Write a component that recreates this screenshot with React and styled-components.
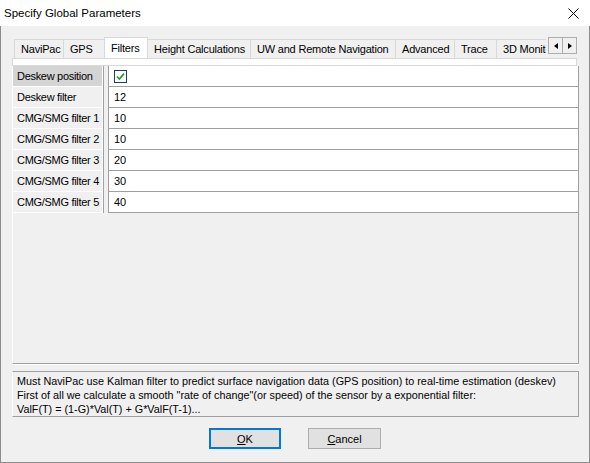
import React from 'react'
import styled, { createGlobalStyle } from 'styled-components'

const Global = createGlobalStyle`
html, body {
  margin: 0;
  padding: 0;
  background: #f0f0f0;
}
* { box-sizing: border-box; }
`

const Window = styled.div`
width: 590px;
height: 463px;
display: flex;
flex-direction: column;
font-family: "Liberation Sans", Arial, sans-serif;
font-size: 11px;
color: #000;
background: #f0f0f0;
`

const TitleBar = styled.div`
height: 26px;
flex: none;
display: flex;
align-items: center;
justify-content: space-between;
background: #fff;
padding-left: 4px;
padding-right: 11px;
font-size: 11.5px;
`

const Close = styled.svg`
width: 11px;
height: 11px;
display: block;
`

const Body = styled.div`
flex: 1;
display: flex;
flex-direction: column;
border: 1px solid #8c8c8c;
border-top: none;
padding: 11px 10px 0 11px;
`

const TabsRow = styled.div`
display: flex;
height: 21px;
margin: 0 2px 0 2px;
`

const TabList = styled.div`
flex: 1;
display: flex;
align-items: flex-end;
overflow: hidden;
padding-left: 1px;
`

const Tab = styled.div`
flex: none;
width: ${p => p.$w}px;
height: ${p => (p.$active ? 22 : 19)}px;
margin-left: -1px;
margin-bottom: ${p => (p.$active ? -1 : 0)}px;
display: flex;
align-items: center;
padding-left: 6px;
padding-bottom: ${p => (p.$active ? 2 : 0)}px;
letter-spacing: -0.2px;
white-space: nowrap;
overflow: hidden;
background: ${p => (p.$active ? '#fff' : '#f0f0f0')};
border: 1px solid #d9d9d9;
border-bottom: none;
position: relative;
z-index: ${p => (p.$active ? 2 : 1)};
`

const Arrows = styled.div`
display: flex;
margin-left: 2px;
`

const ArrowBtn = styled.div`
width: 15px;
height: 17px;
display: flex;
align-items: center;
justify-content: center;
background: #f0f0f0;
border: 1px solid #adadad;
& + & { margin-left: -1px; }
`

const Tri = styled.span`
width: 0;
height: 0;
border-top: 3.5px solid transparent;
border-bottom: 3.5px solid transparent;
${p => (p.$dir === 'left' ? 'border-right: 4px solid #000;' : 'border-left: 4px solid #000;')}
`

const PageStrip = styled.div`
height: 8px;
margin-right: 2px;
background: #fff;
border: 1px solid #d9d9d9;
`

const Grid = styled.div`
height: 298px;
display: flex;
flex-direction: column;
background: #f0f0f0;
border-left: 1px solid #fff;
border-right: 1px solid #a0a0a0;
border-bottom: 1px solid #a0a0a0;
box-shadow: 0 1px 0 #fff;
`

const Row = styled.div`
display: flex;
height: 21px;
`

const Label = styled.div`
width: 89px;
display: flex;
align-items: center;
padding-left: 4px;
letter-spacing: -0.3px;
background: ${p => (p.$selected ? '#d4d4d4' : '#f0f0f0')};
border-bottom: 1px solid #fff;
white-space: nowrap;
overflow: hidden;
`

const Divider = styled.div`
width: 7px;
border-left: 1px solid #fff;
border-right: 1px solid #a0a0a0;
background: linear-gradient(to right, #a0a0a0 0 1px, #f0f0f0 1px);
`

const Value = styled.div`
flex: 1;
display: flex;
align-items: center;
padding-left: 5px;
background: #fff;
border-bottom: 1px solid #a0a0a0;
`

const Check = styled.svg`
width: 13px;
height: 13px;
display: block;
`

const Description = styled.div`
margin-top: 7px;
height: 46px;
padding: 2px 4px 0 4px;
line-height: 14px;
font-size: 10.8px;
border: 1px solid #a0a0a0;
border-left-color: #fff;
white-space: nowrap;
`

const Buttons = styled.div`
display: flex;
justify-content: center;
gap: 27px;
margin-top: 11px;
padding-right: 1px;
`

const Button = styled.div`
width: ${p => p.$w}px;
height: 21px;
display: flex;
align-items: center;
justify-content: center;
background: #e1e1e1;
border: ${p => (p.$focus ? '2px solid #0078d7' : '1px solid #adadad')};
`

const tabs = [
  ['NaviPac', 50],
  ['GPS', 42],
  ['Filters', 44, true],
  ['Height Calculations', 104],
  ['UW and Remote Navigation', 146],
  ['Advanced', 60],
  ['Trace', 43],
  ['3D Monitor', 70],
]

const rows = [
  ['Deskew position', null],
  ['Deskew filter', '12'],
  ['CMG/SMG filter 1', '10'],
  ['CMG/SMG filter 2', '10'],
  ['CMG/SMG filter 3', '20'],
  ['CMG/SMG filter 4', '30'],
  ['CMG/SMG filter 5', '40'],
]

export default function App() {
  return (
    <Window>
      <Global />
      <TitleBar>
        <span>Specify Global Parameters</span>
        <Close viewBox="0 0 11 11">
          <path d="M0.5 0.5 L10.5 10.5 M10.5 0.5 L0.5 10.5" stroke="#000" strokeWidth="1" fill="none" />
        </Close>
      </TitleBar>
      <Body>
        <TabsRow>
          <TabList>
            {tabs.map(([name, w, active]) => (
              <Tab key={name} $w={w} $active={active}>{name}</Tab>
            ))}
          </TabList>
          <Arrows>
            <ArrowBtn><Tri $dir="left" /></ArrowBtn>
            <ArrowBtn><Tri $dir="right" /></ArrowBtn>
          </Arrows>
        </TabsRow>
        <PageStrip />
        <Grid>
          {rows.map(([label, value], i) => (
            <Row key={label}>
              <Label $selected={i === 0}>{label}</Label>
              <Divider />
              <Value>
                {value === null ? (
                  <Check viewBox="0 0 13 13">
                    <rect x="0.5" y="0.5" width="12" height="12" fill="#fff" stroke="#1f3f5f" />
                    <path d="M3 6.5 L5.4 9 L10 3.6" stroke="#2a9a2a" strokeWidth="1.7" fill="none" />
                  </Check>
                ) : value}
              </Value>
            </Row>
          ))}
        </Grid>
        <Description>
          Must NaviPac use Kalman filter to predict surface navigation data (GPS position) to real-time estimation (deskev)<br />
          First of all we calculate a smooth "rate of change"(or speed) of the sensor by a exponential filter:<br />
          ValF(T) = (1-G)*Val(T) + G*ValF(T-1)...
        </Description>
        <Buttons>
          <Button $w={72} $focus><span><u>O</u>K</span></Button>
          <Button $w={73}><span><u>C</u>ancel</span></Button>
        </Buttons>
      </Body>
    </Window>
  )
}
